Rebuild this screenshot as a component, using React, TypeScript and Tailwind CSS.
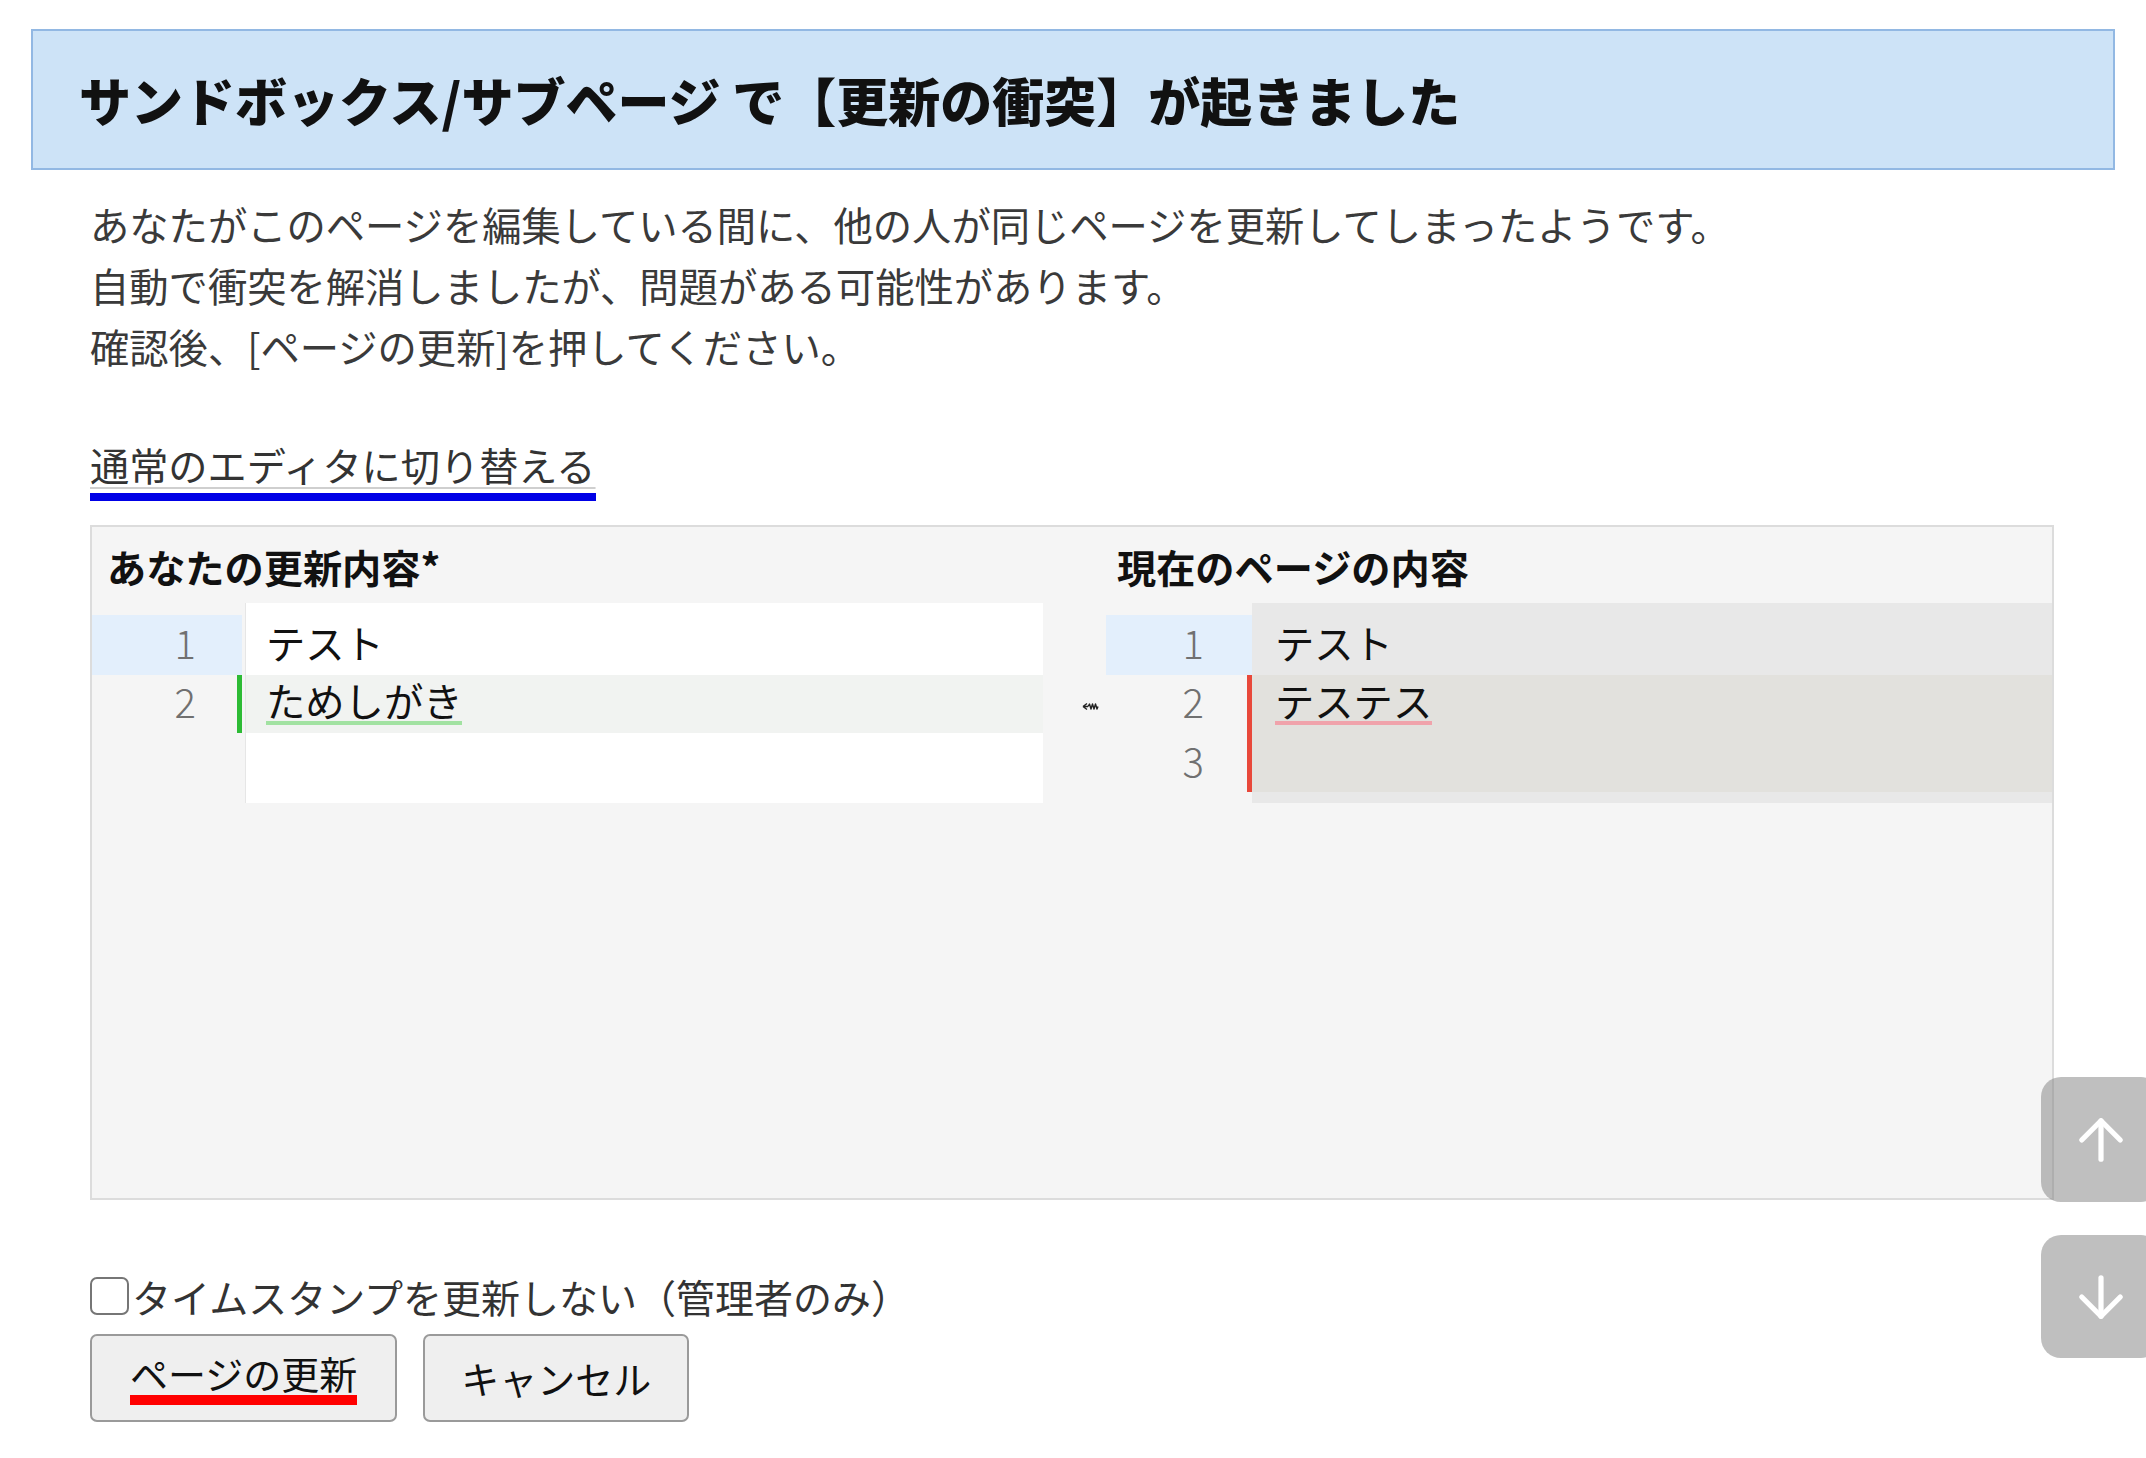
import React from 'react';
import { ArrowUp, ArrowDown } from 'lucide-react';

const BODY_LINES = [
  'あなたがこのページを編集している間に、他の人が同じページを更新してしまったようです。',
  '自動で衝突を解消しましたが、問題がある可能性があります。',
  '確認後、[ページの更新]を押してください。',
];

interface Row {
  num: number;
  h: string;
  gutter: string;
  bar: string;
  line: string;
  text?: string;
  mark?: string;
}

const mine: Row[] = [
  { num: 1, h: 'h-[60px]', gutter: 'bg-[#e3effc]', bar: 'border-transparent', line: '', text: 'テスト' },
  { num: 2, h: 'h-[58px]', gutter: '', bar: 'border-[#2dbb35]', line: 'bg-[#f1f3f1]', text: 'ためしがき', mark: 'border-[#a2e2a2]' },
];

const theirs: Row[] = [
  { num: 1, h: 'h-[60px]', gutter: 'bg-[#e3effc]', bar: 'border-transparent', line: '', text: 'テスト' },
  { num: 2, h: 'h-[58px]', gutter: '', bar: 'border-[#e8483a]', line: 'bg-[#e2e1dd]', text: 'テステス', mark: 'border-[#f0a3ab]' },
  { num: 3, h: 'h-[59px]', gutter: '', bar: 'border-[#e8483a]', line: 'bg-[#e2e1dd]' },
];

const LineText: React.FC<{ row: Row }> = ({ row }) => {
  if (!row.text) return null;
  if (!row.mark) return <span>{row.text}</span>;
  return (
    <span className={`inline-block leading-[43px] border-b-[4px] ${row.mark}`}>{row.text}</span>
  );
};

const Gutter: React.FC<{ rows: Row[]; width: string; numPad: string }> = ({ rows, width, numPad }) => (
  <div className={`${width} shrink-0 pt-[12px] flex flex-col`}>
    {rows.map((r) => (
      <div
        key={r.num}
        className={`${r.h} ${r.gutter} ${r.bar} ${numPad} pb-[6px] border-r-[5px] flex items-center justify-end text-[40px] font-light text-[#707070]`}
      >
        {r.num}
      </div>
    ))}
  </div>
);

// small "take theirs" squiggle arrow between the two editors
const MergeArrow = () => (
  <svg width="17" height="9" viewBox="0 0 17 9" fill="none" stroke="#222" strokeWidth="1.4" strokeLinejoin="round">
    <path d="M1 4.5 L5 1.5 M1 4.5 L5 7.5 M1 4.5 H6" />
    <path d="M6 4.5 l1.5 -2.5 l1.5 5 l1.5 -5 l1.5 5 l1.5 -5 l1.5 5 l1 -2.5" />
  </svg>
);

export default function App() {
  return (
    <div className="relative w-full h-[1458px] overflow-hidden bg-white font-['Noto_Sans_CJK_JP','Noto_Sans',sans-serif] text-[#333]">
      <div className="pt-[29px]">
        {/* page title */}
        <div className="mx-[31px] h-[141px] border-2 border-[#92b8e3] bg-[#cde3f7] flex items-center pl-[46px]">
          <h1 className="text-[52px] font-black leading-none text-[#111] whitespace-nowrap">
            サンドボックス/サブページ で【更新の衝突】が起きました
          </h1>
        </div>

        <div className="pl-[90px] pr-[92px]">
          <div className="mt-[23px] text-[39.3px] leading-[61px] text-[#3a3a3a]">
            {BODY_LINES.map((l) => (
              <p key={l} className="whitespace-nowrap">{l}</p>
            ))}
          </div>

          {/* switch link */}
          <div className="mt-[63px] inline-flex flex-col">
            <a className="text-[39.2px] leading-[50px] text-[#333] underline decoration-[#cfcfcf] decoration-2 underline-offset-[6px] whitespace-nowrap">
              通常のエディタに切り替える
            </a>
            <div className="mt-[4px] h-[8px] bg-[#0000e6]" />
          </div>

          {/* merge panel */}
          <div className="mt-[24px] w-[1964px] h-[675px] border-2 border-[#dcdcdc] bg-[#f5f5f5]">
            <div className="flex pt-[17px] text-[39.2px] leading-[44px] font-bold text-[#111]">
              <div className="w-[1014px] pl-[15px]">あなたの更新内容*</div>
              <div className="pl-[11px]">現在のページの内容</div>
            </div>

            <div className="mt-[15px] flex text-[39.3px] text-[#111]">
              {/* your version */}
              <div className="w-[951px] flex">
                <div className="w-[153px] pr-[3px] shrink-0">
                  <Gutter rows={mine} width="w-full" numPad="pr-[41px]" />
                </div>
                <div className="flex-1 bg-white border-l border-[#e6e6e6] pt-[12px] pb-[11px]">
                  {[...mine, { num: 3, h: 'h-[59px]', gutter: '', bar: '', line: '' } as Row].map((r) => (
                    <div key={r.num} className={`${r.h} ${r.line} flex items-center pl-[20px] pb-[6px]`}>
                      <LineText row={r} />
                    </div>
                  ))}
                </div>
              </div>

              {/* merge marker */}
              <div className="w-[63px] shrink-0 pt-[12px] flex flex-col">
                <div className="h-[60px]" />
                <div className="h-[58px] flex items-center justify-end pr-[7px] pt-[4px]">
                  <MergeArrow />
                </div>
              </div>

              {/* current version */}
              <div className="flex-1 flex">
                <Gutter rows={theirs} width="w-[146px]" numPad="pr-[43px]" />
                <div className="flex-1 bg-[#e8e8e8] pt-[12px] pb-[11px]">
                  {theirs.map((r) => (
                    <div key={r.num} className={`${r.h} ${r.line} flex items-center pl-[23px] pb-[6px]`}>
                      <LineText row={r} />
                    </div>
                  ))}
                </div>
              </div>
            </div>
          </div>

          {/* options */}
          <label className="mt-[71px] h-[50px] flex items-center text-[39px] text-[#333]">
            <span className="w-[39px] h-[38px] shrink-0 rounded-[7px] border-2 border-[#767676] bg-white" />
            <span className="ml-[3px] whitespace-nowrap">タイムスタンプを更新しない（管理者のみ）</span>
          </label>

          <div className="mt-[13px] flex gap-[26px]">
            <button className="h-[88px] px-[38px] rounded-[7px] border-2 border-[#9a9a9a] bg-[#efefef] text-[38px] text-[#111] flex items-center">
              <span className="inline-flex flex-col">
                <span className="leading-[44px]">ページの更新</span>
                <span className="h-[10px] bg-[#ff0000]" />
              </span>
            </button>
            <button className="h-[88px] px-[36px] rounded-[7px] border-2 border-[#9a9a9a] bg-[#efefef] text-[38px] text-[#111] flex items-center">
              <span className="leading-[44px]">キャンセル</span>
            </button>
          </div>
        </div>
      </div>

      {/* floating scroll buttons */}
      <div className="absolute left-[2041px] top-[1077px] w-[120px] h-[125px] rounded-[20px] bg-[#808080]/50 flex items-center justify-center">
        <ArrowUp size={66} strokeWidth={1.9} className="text-white" />
      </div>
      <div className="absolute left-[2041px] top-[1235px] w-[120px] h-[123px] rounded-[20px] bg-[#808080]/50 flex items-center justify-center">
        <ArrowDown size={66} strokeWidth={1.9} className="text-white" />
      </div>
    </div>
  );
}
